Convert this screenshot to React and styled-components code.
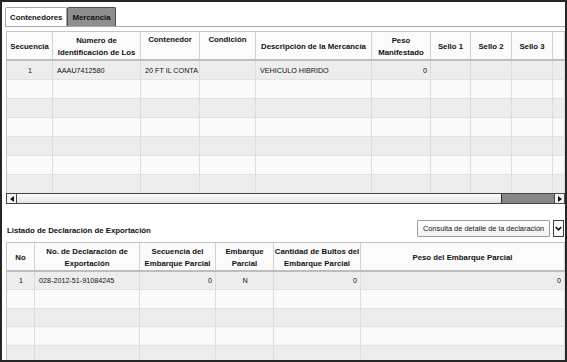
import React from "react";
import styled, { createGlobalStyle } from "styled-components";

const GlobalStyle = createGlobalStyle`
  html, body { margin: 0; padding: 0; background: #fff; }
  body { font-family: "Liberation Sans", Arial, sans-serif; }
`;

const Frame = styled.div`
  width: 567px;
  height: 362px;
  box-sizing: border-box;
  border: 2px solid #262626;
  padding: 5px 0 0 4px;
  display: flex;
  flex-direction: column;
  overflow: hidden;
  background: #fff;
  color: #111;
`;

const TabStrip = styled.div`
  display: flex;
  align-items: flex-end;
  height: 19px;
  margin-left: -1px;
  border-bottom: 1px solid #a9a9a9;
`;

const Tab = styled.div`
  height: 19px;
  box-sizing: border-box;
  padding: 0 4px;
  display: flex;
  align-items: center;
  font-size: 7.8px;
  font-weight: bold;
  border: 1px solid ${({ $active }) => ($active ? "#a5a5a5" : "#4d4d4d")};
  border-bottom: none;
  border-radius: 2px 2px 0 0;
  background: ${({ $active }) => ($active ? "#fff" : "#8e8e8e")};
  color: #111;
`;

const Table = styled.div`
  border-left: 1px solid #c4c4c4;
  border-top: 1px solid #c4c4c4;
  margin-top: ${({ $gap }) => $gap}px;
`;

const HeadRow = styled.div`
  display: grid;
  grid-template-columns: ${({ $cols }) => $cols};
  height: 27px;
  border-bottom: 2px solid #bdbdbd;
  background: #fbfbfb;
`;

const HeadCell = styled.div`
  box-sizing: border-box;
  border-right: 1px solid #d2d2d2;
  display: flex;
  justify-content: center;
  align-items: ${({ $top }) => ($top ? "flex-start" : "center")};
  padding-top: 2px;
  text-align: center;
  font-size: 7.8px;
  font-weight: bold;
  line-height: 12px;
  white-space: pre-line;
`;

const Row = styled.div`
  display: grid;
  grid-template-columns: ${({ $cols }) => $cols};
  height: ${({ $h }) => $h}px;
  box-sizing: border-box;
  border-bottom: 1px solid #e2e2e2;
  background: ${({ $alt }) => ($alt ? "#ededed" : "#fafafa")};
`;

const Cell = styled.div`
  box-sizing: border-box;
  border-right: 1px solid #dcdcdc;
  display: flex;
  align-items: center;
  justify-content: ${({ $align }) =>
    $align === "center" ? "center" : $align === "right" ? "flex-end" : "flex-start"};
  padding: 0 3px 0 4px;
  font-size: 7.2px;
  white-space: nowrap;
  overflow: hidden;
`;

const HScroll = styled.div`
  display: flex;
  height: 11px;
  box-sizing: border-box;
  border: 1px solid #474747;
  margin: -1px 0 0 -1px;
  background: linear-gradient(#fdfdfd, #e4e4e4);
`;

const ScrollBtn = styled.div`
  width: 9px;
  display: flex;
  align-items: center;
  justify-content: center;
  background: #f6f6f6;
  border-${({ $side }) => ($side === "left" ? "right" : "left")}: 1px solid #474747;
  &::after {
    content: "";
    border-top: 3px solid transparent;
    border-bottom: 3px solid transparent;
    border-${({ $side }) => ($side === "left" ? "right" : "left")}: 4px solid #111;
  }
`;

const Track = styled.div`
  flex: 1;
  display: flex;
  justify-content: flex-end;
`;

const Thumb = styled.div`
  width: 52px;
  background: #878787;
  border-left: 1px solid #2e2e2e;
`;

const Toolbar = styled.div`
  display: flex;
  justify-content: space-between;
  align-items: center;
  height: 17px;
  margin-top: 16px;
  padding-right: 1px;
`;

const Title = styled.div`
  font-size: 7.8px;
  font-weight: bold;
  line-height: 12px;
  padding: 5px 0 0 1px;
`;

const Actions = styled.div`
  display: flex;
  gap: 3px;
  height: 17px;
`;

const ActionButton = styled.div`
  width: 133px;
  box-sizing: border-box;
  border: 1px solid #9c9c9c;
  border-radius: 1px;
  background: linear-gradient(#ffffff, #f1f1f1);
  display: flex;
  align-items: center;
  justify-content: center;
  font-size: 7.4px;
  color: #111;
`;

const MenuButton = styled.div`
  width: 11px;
  box-sizing: border-box;
  border: 1px solid #3c3c3c;
  background: #fbfbfb;
  display: flex;
  align-items: center;
  justify-content: center;
`;

const topCols = [
  { title: "Secuencia", w: 46 },
  { title: "Número de\nIdentificación de Los", w: 88 },
  { title: "Contenedor", w: 59, top: true },
  { title: "Condición", w: 56, top: true },
  { title: "Descripción de la Mercancía", w: 116 },
  { title: "Peso\nManifestado", w: 59 },
  { title: "Sello 1", w: 40 },
  { title: "Sello 2", w: 41 },
  { title: "Sello 3", w: 41 },
  { title: "", w: 0 },
];

const bottomCols = [
  { title: "No", w: 28 },
  { title: "No. de Declaración de\nExportación", w: 105 },
  { title: "Secuencia del\nEmbarque Parcial", w: 76 },
  { title: "Embarque\nParcial", w: 58 },
  { title: "Cantidad de Bultos del\nEmbarque Parcial", w: 87 },
  { title: "Peso del Embarque Parcial", w: 0 },
];

const colTemplate = (cols) => cols.map((c) => (c.w ? `${c.w}px` : "1fr")).join(" ");

const topRows = [
  [
    { v: "1", a: "center" },
    { v: "AAAU7412580" },
    { v: "20 FT IL CONTA" },
    { v: "" },
    { v: "VEHICULO HIBRIDO" },
    { v: "0", a: "right" },
  ],
];

const bottomRows = [
  [
    { v: "1", a: "center" },
    { v: "028-2012-51-91084245" },
    { v: "0", a: "right" },
    { v: "N", a: "center" },
    { v: "0", a: "right" },
    { v: "0", a: "right" },
  ],
];

function DataGrid({ cols, rows, count, rowHeight, gap, children }) {
  const template = colTemplate(cols);
  return (
    <Table $gap={gap}>
      <HeadRow $cols={template}>
        {cols.map((c, i) => (
          <HeadCell key={i} $top={c.top}>
            {c.title}
          </HeadCell>
        ))}
      </HeadRow>
      {Array.from({ length: count }).map((_, r) => (
        <Row key={r} $cols={template} $h={rowHeight} $alt={r % 2 === 0}>
          {cols.map((c, i) => {
            const cell = rows[r] && rows[r][i];
            return (
              <Cell key={i} $align={cell && cell.a}>
                {cell ? cell.v : ""}
              </Cell>
            );
          })}
        </Row>
      ))}
      {children}
    </Table>
  );
}

export default function App() {
  return (
    <>
      <GlobalStyle />
      <Frame>
        <TabStrip>
          <Tab $active>Contenedores</Tab>
          <Tab>Mercancia</Tab>
        </TabStrip>
        <DataGrid cols={topCols} rows={topRows} count={7} rowHeight={19} gap={4}>
          <HScroll>
            <ScrollBtn $side="left" />
            <Track>
              <Thumb />
            </Track>
            <ScrollBtn $side="right" />
          </HScroll>
        </DataGrid>
        <Toolbar>
          <Title>Listado de Declaración de Exportación</Title>
          <Actions>
            <ActionButton>Consulta de detalle de la declaración</ActionButton>
            <MenuButton>
              <svg width="7" height="5" viewBox="0 0 7 5">
                <path d="M0.8 1 L3.5 3.8 L6.2 1" fill="none" stroke="#111" strokeWidth="1.6" />
              </svg>
            </MenuButton>
          </Actions>
        </Toolbar>
        <DataGrid cols={bottomCols} rows={bottomRows} count={5} rowHeight={18.4} gap={5} />
      </Frame>
    </>
  );
}
